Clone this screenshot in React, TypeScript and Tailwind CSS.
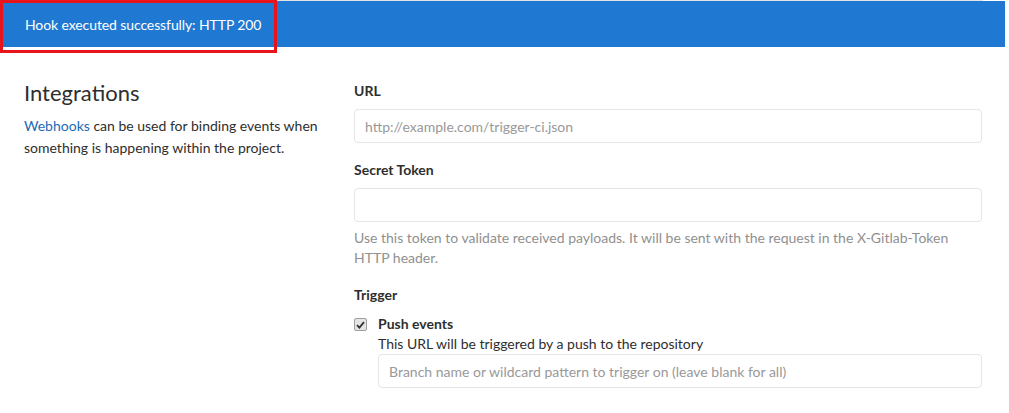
import React from "react";

const font = { fontFamily: 'Lato, "Noto Sans", Arial, sans-serif' };

function TextInput({ placeholder = "" }: { placeholder?: string }) {
    return (
        <input
            type="text"
            placeholder={placeholder}
            className="block w-full h-[34px] rounded border border-[#e5e5e5] bg-white px-[10px] text-[14px] text-[#2e2e2e] placeholder:text-[#999] outline-none"
        />
    );
}

export default function App() {
    return (
        <main className="relative min-h-[413px] bg-white text-[#2e2e2e] text-[14px]" style={font}>
            {/* top edge */}
            <div className="h-px w-[983px] bg-[#e3e3e3]"></div>

            {/* flash banner */}
            <div className="flex h-[46px] w-[1005px] items-center bg-[#1f78d1] pl-[25px] text-[14px] tracking-[-0.1px] text-white">
                Hook executed successfully: HTTP 200
            </div>

            {/* annotation box */}
            <div className="pointer-events-none absolute left-0 top-0 h-[53px] w-[277px] border-[3px] border-[#e8141c]"></div>

            <div className="flex pl-[24px] pr-[27px] pt-[33px]">
                {/* Left column */}
                <div className="w-[330px] shrink-0 pr-[8px]">
                    <h4 className="text-[22px] leading-[26px] font-normal text-[#2e2e2e]">Integrations</h4>
                    <p className="mt-[9px] leading-[22px]">
                        <a href="#" className="text-[#1b69b6]">Webhooks</a> can be used for binding events when something is happening within the project.
                    </p>
                </div>

                {/* Right column */}
                <div className="flex-1 pt-px">
                    <div>
                        <label className="block font-bold leading-[20px] mb-[8px]">URL</label>
                        <TextInput placeholder="http://example.com/trigger-ci.json" />
                    </div>

                    <div className="mt-[17px]">
                        <label className="block font-bold leading-[20px] mb-[8px]">Secret Token</label>
                        <TextInput />
                        <p className="mt-[6px] leading-[20px] text-[#909090]">
                            Use this token to validate received payloads. It will be sent with the request in the X-Gitlab-Token HTTP header.
                        </p>
                    </div>

                    <div className="mt-[17px]">
                        <label className="block font-bold leading-[20px]">Trigger</label>
                        <div className="mt-[9px] flex">
                            <div className="w-[24px] shrink-0 pt-[4px]">
                                <div className="flex h-[13px] w-[13px] items-center justify-center rounded-[2px] border border-[#a0a0a0] bg-[#e4e4e4]">
                                    <svg width="9" height="8" viewBox="0 0 9 8">
                                        <path d="M1 4.2 L3.4 6.6 L8 1.2" fill="none" stroke="#333" strokeWidth="1.8" />
                                    </svg>
                                </div>
                            </div>
                            <div className="flex-1">
                                <div className="font-bold leading-[20px]">Push events</div>
                                <div className="leading-[20px]">This URL will be triggered by a push to the repository</div>
                                <TextInput placeholder="Branch name or wildcard pattern to trigger on (leave blank for all)" />
                            </div>
                        </div>
                    </div>
                </div>
            </div>
        </main>
    );
}
